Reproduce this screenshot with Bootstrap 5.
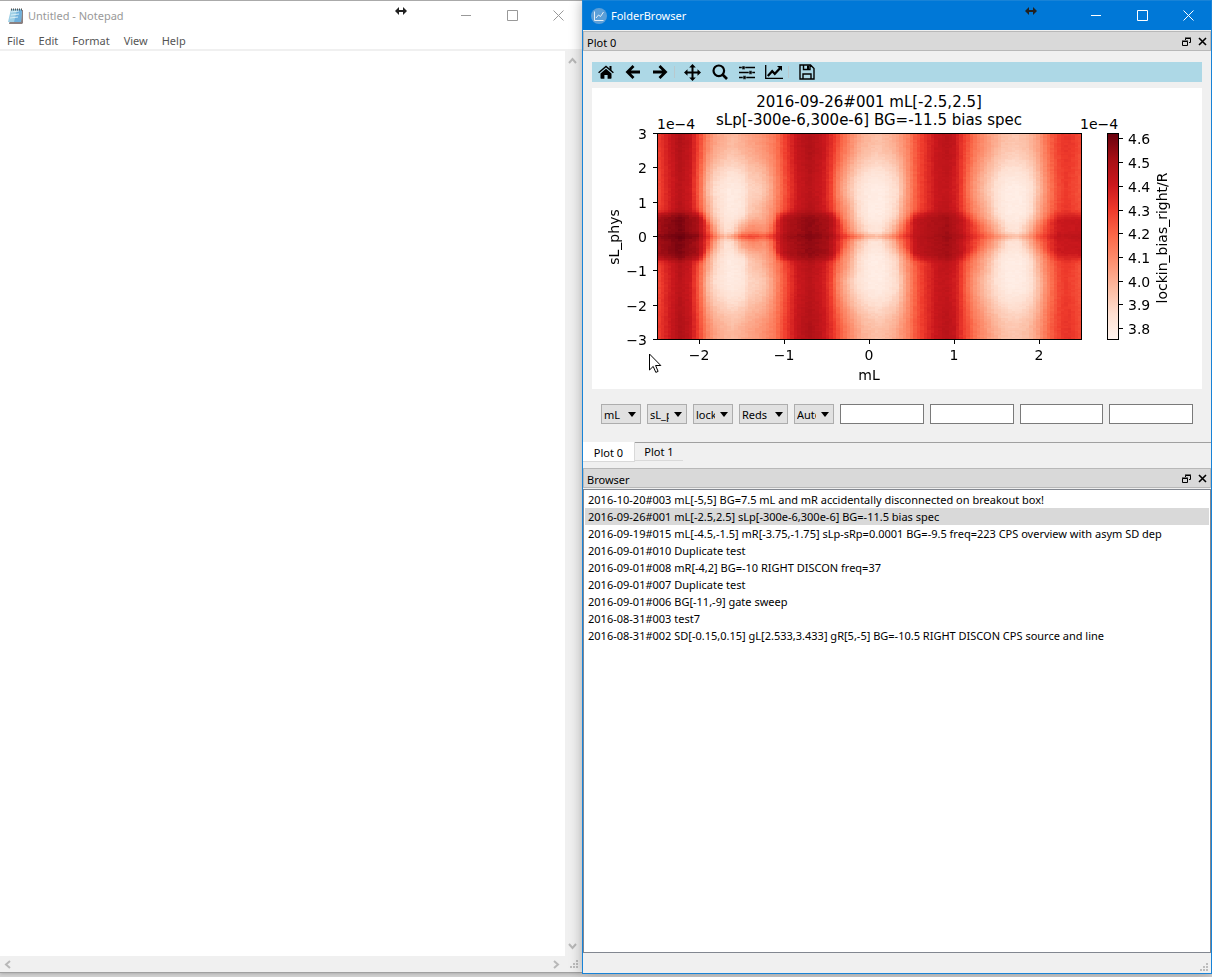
<!DOCTYPE html>
<html lang="en">
<head>
<meta charset="utf-8">
<meta name="viewport" content="width=device-width, initial-scale=1">
<title>FolderBrowser</title>
<link href="https://cdn.jsdelivr.net/npm/bootstrap@5.3.0/dist/css/bootstrap.min.css" rel="stylesheet">
<style>
body { font-family: "Noto Sans", "Open Sans", sans-serif; font-size: 11px; line-height: 17px; color: #000; background: #d2d2d2; }
button { color: inherit; font: inherit; }
svg { display: block; }
.desktop { display: grid; grid-template-columns: 582fr 630fr; min-height: 100vh; padding-bottom: 3px; }
.bare { background: none; border: 0; padding: 0; display: flex; align-items: center; justify-content: center; }

.win-note { background: #fff; border-top: 1px solid #aaa; border-bottom: 1px solid #a0a0a0; box-shadow: 0 0 4px #999; min-width: 0; margin-bottom: 1px; }
.titlebar { height: 29px; }
.win-note .titlebar { color: #999; padding: 0 1px 0 8px; }
.win-btn { width: 46px; height: 28px; }
.menu-row { height: 21px; padding: 2px 0 0 7px; gap: 14px; border-bottom: 2px solid #f0f0f0; color: #555; }
.menu-row a { color: inherit; text-decoration: none; }
.editor { display: grid; grid-template-columns: 1fr 17px; grid-template-rows: 1fr 16px; background: #f0f0f0; color: #b8b8b8; }
.editor textarea { border: 0; resize: none; background: #fff; outline: 0; width: 100%; }
.bar-v { padding: 4px 2px 4px 0; }
.bar-h { padding: 0 4px; }

.win-folder { background: #f0f0f0; border: 1px solid #1883d7; box-shadow: 0 0 12px rgba(0,0,0,.3); min-width: 0; z-index: 1; }
.win-folder .titlebar { background: #0078d7; color: #fff; padding-left: 8px; }
.dock-title { background: #d9d9d9; border: 1px solid #b8b8b8; height: 20px; padding: 2px 0 0 3px; margin-top: 1px; line-height: 17px; }
.dock-title button { width: 16px; height: 14px; }
.plot-body { padding: 11px 9px 18px; }
.tools { background: #add8e6; height: 20px; }
.tools button { width: 27px; height: 20px; }
.tools i { width: 6px; height: 12px; border-left: 1px solid #b9c9ce; margin-right: -1px; margin-left: 1px; }
.figure-box { background: #fff; margin-top: 6px; }
.figure-box text { font-family: "DejaVu Sans", sans-serif; font-size: 14px; fill: #000; }
.figure-box .heading { font-size: 15px; }
.axis path, .frame { stroke: #000; fill: none; shape-rendering: crispEdges; }
.controls { gap: 6px; padding: 15px 9px 0 9px; }
.pick { position: relative; flex: 0 0 40px; }
.pick.wide { flex-basis: 49px; }
.pick select { appearance: none; width: 100%; height: 20px; border: 1px solid #adadad; border-radius: 0; background: #e1e1e1; padding: 1px 17px 0 2px; color: #000; display: block; }
.pick::after { content: ""; position: absolute; right: 5px; top: 8px; border: 4px solid transparent; border-top: 5px solid #000; border-bottom: 0; pointer-events: none; }
.controls input { flex: 1 1 0; min-width: 0; height: 20px; border: 1px solid #7a7a7a; background: #fff; padding: 0 3px; }
.dock-tabs { border-top: 1px solid #a0a0a0; height: 26px; }
.dock-tabs button { border: 0; height: 18px; border-bottom: 1px solid #d9d9d9; width: 48px; background: none; padding: 0; }
.dock-tabs .active { height: 20px; width: 52px; background: #fff; border-right: 1px solid #d9d9d9; margin-top: -1px; padding-top: 2px; }
.runs { background: #fff; border: 1px solid #828790; margin-top: 1px; padding: 1px; }
.runs .list-group-item { border: 0; padding: 0 3px; background: none; color: #000; border-radius: 0; white-space: nowrap; overflow: hidden; line-height: 17px; }
.runs .list-group-item.active { background: #d9d9d9; margin: 0; }
.status { height: 20px; padding: 0 3px 2px 0; color: #bbb; }

.cursor { position: absolute; z-index: 5; pointer-events: none; }
.cur-a { left: 395px; top: 6px; }
.cur-b { left: 1025px; top: 6px; }
.cur-c { left: 649px; top: 353px; }
</style>
</head>
<body>
<svg width="0" height="0" class="position-absolute" aria-hidden="true">
  <defs>
    <symbol id="resize" viewBox="0 0 12 10"><path d="M0 5l4-4v3h4V1l4 4-4 4V6H4v3z" fill="#222"/></symbol>
    <symbol id="grip" viewBox="0 0 8 8"><path d="M6 0h2v2H6zM3 3h2v2H3zM6 3h2v2H6zM0 6h2v2H0zM3 6h2v2H3zM6 6h2v2H6z" fill="#bdbdbd"/></symbol>
    <symbol id="float" viewBox="0 0 9 9"><path d="M3.500 3V1.500h5v4H7M3 1h6M.5 4.500h5v4h-5zM0 4h6" fill="none" stroke="#000"/></symbol>
    <symbol id="shut" viewBox="0 0 9 9"><path d="M1 1l7 7M8 1L1 8" stroke="#000" stroke-width="1.600"/></symbol>
    <symbol id="min" viewBox="0 0 11 11"><path d="M0 5.500h10" stroke="currentColor"/></symbol>
    <symbol id="max" viewBox="0 0 11 11"><path d="M.5.5h10v10H.5z" fill="none" stroke="currentColor"/></symbol>
    <symbol id="exit" viewBox="0 0 11 11"><path d="M.5.5l10 10M10.500.5l-10 10" stroke="currentColor"/></symbol>
  </defs>
</svg>
<main class="desktop">
  <section class="win-note d-flex flex-column" aria-label="Notepad">
    <header class="titlebar d-flex align-items-center">
      <svg width="16" height="18" viewBox="0 0 16 18" class="me-1"><path d="M4 3h11v13l-1 1H1z" fill="#8b8080"/><path d="M3 2h11l-1 13H0z" fill="#9fd0e6"/><path d="M9 3h5l-1 12H6z" fill="#6fb0dc"/><path d="M3 5l8-1M3 8l8-1M2 11l8-1" stroke="#d7eef7"/><path d="M3 2.500h11" stroke="#555" stroke-width="2" stroke-dasharray="1 1"/></svg>
      <span class="me-auto">Untitled - Notepad</span>
      <button class="bare win-btn" aria-label="Minimize"><svg width="11" height="11"><use href="#min"/></svg></button>
      <button class="bare win-btn" aria-label="Maximize"><svg width="11" height="11"><use href="#max"/></svg></button>
      <button class="bare win-btn" aria-label="Close"><svg width="11" height="11"><use href="#exit"/></svg></button>
    </header>
    <nav class="menu-row d-flex"><a href="#">File</a><a href="#">Edit</a><a href="#">Format</a><a href="#">View</a><a href="#">Help</a></nav>
    <div class="editor flex-grow-1">
      <textarea aria-label="Document text"></textarea>
      <div class="bar-v d-flex flex-column justify-content-between align-items-center">
        <button class="bare" aria-label="Scroll up"><svg width="9" height="11" viewBox="0 0 9 11"><path d="M1 8l3.500-4L8 8" fill="none" stroke="currentColor" stroke-width="2"/></svg></button>
        <button class="bare" aria-label="Scroll down"><svg width="9" height="11" viewBox="0 0 9 11"><path d="M1 3l3.500 4L8 3" fill="none" stroke="currentColor" stroke-width="2"/></svg></button>
      </div>
      <div class="bar-h d-flex justify-content-between align-items-center">
        <button class="bare" aria-label="Scroll left"><svg width="9" height="9" viewBox="0 0 9 9"><path d="M6 1L2 4.500 6 8" fill="none" stroke="currentColor" stroke-width="2"/></svg></button>
        <button class="bare" aria-label="Scroll right"><svg width="9" height="9" viewBox="0 0 9 9"><path d="M2 1l4 3.500L2 8" fill="none" stroke="currentColor" stroke-width="2"/></svg></button>
      </div>
      <div class="d-flex justify-content-center align-items-end pb-1"><svg width="8" height="8"><use href="#grip"/></svg></div>
    </div>
  </section>

  <section class="win-folder d-flex flex-column" aria-label="FolderBrowser">
    <header class="titlebar d-flex align-items-center">
      <svg width="16" height="16" viewBox="0 0 16 16" class="me-1"><circle cx="8" cy="8" r="8" fill="#5c9fd8"/><path d="M3.500 3.500v9h9M5 10l2.500-3 2 1.500L12.500 4" fill="none" stroke="#e4eef6"/></svg>
      <span class="me-auto">FolderBrowser</span>
      <button class="bare win-btn" aria-label="Minimize"><svg width="11" height="11"><use href="#min"/></svg></button>
      <button class="bare win-btn" aria-label="Maximize"><svg width="11" height="11"><use href="#max"/></svg></button>
      <button class="bare win-btn" aria-label="Close"><svg width="11" height="11"><use href="#exit"/></svg></button>
    </header>
    <div class="dock-title d-flex"><span class="me-auto">Plot 0</span>
      <button class="bare" aria-label="Float Plot 0"><svg width="9" height="9"><use href="#float"/></svg></button>
      <button class="bare" aria-label="Close Plot 0"><svg width="9" height="9"><use href="#shut"/></svg></button>
    </div>
    <div class="plot-body">
      <div class="tools d-flex align-items-center" role="toolbar" aria-label="Plot tools">
        <button class="bare" aria-label="Home"><svg width="16" height="16" viewBox="0 0 16 16"><path d="M8 4.800L13.500 9.500V14a.7.7 0 0 1-.7.7H9.600V11H6.400v3.700H3.200a.7.7 0 0 1-.7-.7V9.500z"/><path d="M.6 8.800L8 2.500l7.400 6.300" fill="none" stroke="#000" stroke-width="1.500"/><path d="M11.500 2h2v5l-2-1.700z"/></svg></button>
        <button class="bare" aria-label="Back"><svg width="16" height="16" viewBox="0 0 16 16"><path d="M15 8H3M8.500 2L2.500 8l6 6" fill="none" stroke="#000" stroke-width="2.800"/></svg></button>
        <button class="bare" aria-label="Forward"><svg width="16" height="16" viewBox="0 0 16 16"><path d="M1 8h12M7.500 2l6 6-6 6" fill="none" stroke="#000" stroke-width="2.800"/></svg></button>
        <i></i>
        <button class="bare" aria-label="Pan"><svg width="17" height="17" viewBox="0 0 17 17"><path d="M8.500 0l3.300 3.600H9.500v3.900h4V5.200L17 8.500l-3.500 3.300V9.500h-4v4h2.300L8.500 17l-3.300-3.500h2.300v-4h-4v2.300L0 8.500l3.500-3.300v2.300h4V3.600H5.200z"/></svg></button>
        <button class="bare" aria-label="Zoom"><svg width="16" height="16" viewBox="0 0 16 16"><circle cx="6.800" cy="6.800" r="5.300" fill="none" stroke="#000" stroke-width="2.200"/><path d="M10.500 10.500l4.500 4.500" stroke="#000" stroke-width="2.600"/></svg></button>
        <button class="bare" aria-label="Subplots"><svg width="16" height="16" viewBox="0 0 16 16"><path d="M0 3.500h16M0 8.500h16M0 13.500h16" stroke="#000" stroke-width="1.300"/><path d="M3 2h3v3.400H3zM10 6.800h3v3.400h-3zM4 11.800h3v3.400H4z" stroke="#add8e6" stroke-width=".5"/></svg></button>
        <button class="bare" aria-label="Customize"><svg width="18" height="16" viewBox="0 0 18 16"><path d="M.7 1v13.300H18" fill="none" stroke="#000" stroke-width="1.300"/><path d="M2.800 12l4.400-4.800 2.600 2.600L15 4.300" fill="none" stroke="#000" stroke-width="2.200"/><path d="M12 2h5v5z"/></svg></button>
        <i></i>
        <button class="bare" aria-label="Save"><svg width="16" height="16" viewBox="0 0 16 16"><path d="M1 1h10.500L15 4.500V15H1zM4 15v-5h8v5M4.500 1v4.500H11V1" fill="none" stroke="#000" stroke-width="1.400"/><path d="M8 1.500h2V5H8z"/></svg></button>
      </div>
      <div class="figure-box">
        <svg viewBox="0 0 610 301" width="100%" role="img" aria-label="Bias spectroscopy heat map">
          <defs><linearGradient id="reds" x1="0" y1="1" x2="0" y2="0">
            <stop offset="0" stop-color="#fff5f0"/><stop offset=".125" stop-color="#fee0d2"/><stop offset=".25" stop-color="#fcbba1"/><stop offset=".375" stop-color="#fc9272"/><stop offset=".5" stop-color="#fb6a4a"/><stop offset=".625" stop-color="#ef3b2c"/><stop offset=".75" stop-color="#cb181d"/><stop offset=".875" stop-color="#a50f15"/><stop offset="1" stop-color="#67000d"/>
          </linearGradient></defs>
          <text class="heading" x="277" y="19" text-anchor="middle">2016-09-26#001 mL[-2.5,2.5]</text>
          <text class="heading" x="277" y="37" text-anchor="middle">sLp[-300e-6,300e-6] BG=-11.5 bias spec</text>
          <text x="65" y="41">1e−4</text>
          <text x="488" y="41">1e−4</text>
          <foreignObject x="65" y="45" width="425" height="207"><canvas id="heat" width="425" height="207" class="d-block"></canvas></foreignObject>
          <rect class="frame" x="65.500" y="45.500" width="424" height="206"/>
          <rect x="515" y="45" width="12" height="207" fill="url(#reds)"/>
          <rect class="frame" x="515.500" y="45.500" width="11" height="206"/>
          <g class="axis" id="axes"></g>
          <text x="277" y="292" text-anchor="middle">mL</text>
          <text transform="translate(27 149) rotate(-90)" text-anchor="middle">sL_phys</text>
          <text transform="translate(575 150) rotate(-90)" text-anchor="middle">lockin_bias_right/R</text>
        </svg>
      </div>
      <form class="controls d-flex">
        <div class="pick"><select aria-label="X axis"><option>mL</option></select></div>
        <div class="pick"><select aria-label="Y axis"><option>sL_phys</option></select></div>
        <div class="pick"><select aria-label="Data"><option>lockin_bias_right/R</option></select></div>
        <div class="pick wide"><select aria-label="Colour map"><option>Reds</option></select></div>
        <div class="pick"><select aria-label="Aspect"><option>Auto</option></select></div>
        <input type="text" aria-label="Minimum"><input type="text" aria-label="Maximum"><input type="text" aria-label="Lower limit"><input type="text" aria-label="Upper limit">
      </form>
    </div>
    <div class="dock-tabs d-flex align-items-start"><button class="active">Plot 0</button><button>Plot 1</button></div>
    <div class="dock-title d-flex mt-0"><span class="me-auto">Browser</span>
      <button class="bare" aria-label="Float Browser"><svg width="9" height="9"><use href="#float"/></svg></button>
      <button class="bare" aria-label="Close Browser"><svg width="9" height="9"><use href="#shut"/></svg></button>
    </div>
    <div class="runs flex-grow-1">
      <ul class="list-group">
        <li class="list-group-item">2016-10-20#003 mL[-5,5] BG=7.5 mL and mR accidentally disconnected on breakout box!</li>
        <li class="list-group-item active">2016-09-26#001 mL[-2.5,2.5] sLp[-300e-6,300e-6] BG=-11.5 bias spec</li>
        <li class="list-group-item">2016-09-19#015 mL[-4.5,-1.5] mR[-3.75,-1.75] sLp-sRp=0.0001 BG=-9.5 freq=223 CPS overview with asym SD dep</li>
        <li class="list-group-item">2016-09-01#010 Duplicate test</li>
        <li class="list-group-item">2016-09-01#008 mR[-4,2] BG=-10 RIGHT DISCON freq=37</li>
        <li class="list-group-item">2016-09-01#007 Duplicate test</li>
        <li class="list-group-item">2016-09-01#006 BG[-11,-9] gate sweep</li>
        <li class="list-group-item">2016-08-31#003 test7</li>
        <li class="list-group-item">2016-08-31#002 SD[-0.15,0.15] gL[2.533,3.433] gR[5,-5] BG=-10.5 RIGHT DISCON CPS source and line</li>
      </ul>
    </div>
    <footer class="status d-flex justify-content-end align-items-end"><svg width="8" height="8"><use href="#grip"/></svg></footer>
  </section>
</main>
<svg class="cursor cur-a" width="12" height="10"><use href="#resize"/></svg>
<svg class="cursor cur-b" width="12" height="10"><use href="#resize"/></svg>
<svg class="cursor cur-c" width="13" height="21" viewBox="0 0 13 21"><path d="M.5 1v16l3.700-3.600 2.600 6 2.300-1-2.500-5.900h5.200z" fill="#fff" stroke="#000"/></svg>
<script src="https://cdn.jsdelivr.net/npm/bootstrap@5.3.0/dist/js/bootstrap.bundle.min.js"></script>
<script>
// Conductance profiles along mL: pairs of x and normalised value.
const far = [0,.62,10,.72,22,.84,33,.78,42,.6,50,.42,60,.31,75,.25,90,.31,105,.37,118,.46,128,.62,140,.78,152,.84,165,.78,175,.66,185,.5,195,.38,205,.28,220,.23,235,.28,250,.42,258,.55,268,.66,278,.76,288,.81,296,.78,306,.62,318,.46,330,.35,345,.24,357,.21,370,.25,380,.34,388,.46,396,.57,405,.64,412,.65,424,.58];
const lobe = [0,.58,10,.7,22,.81,33,.75,42,.52,50,.25,58,.13,72,.06,85,.08,92,.16,105,.2,112,.28,120,.42,130,.6,140,.75,152,.81,165,.75,173,.62,180,.42,190,.25,200,.12,213,.05,225,.05,240,.14,250,.36,260,.56,270,.68,280,.77,290,.78,300,.7,308,.52,315,.38,328,.22,340,.1,350,.05,364,.05,374,.12,382,.26,390,.42,400,.58,408,.63,424,.56];
const core = [0,.87,22,.96,40,.87,48,.68,54,.46,60,.27,68,.12,76,.15,84,.33,95,.42,108,.38,115,.5,122,.75,132,.85,152,.92,170,.87,178,.75,188,.5,200,.25,213,.1,222,.1,235,.25,245,.5,252,.65,258,.78,270,.83,290,.88,303,.79,315,.63,330,.42,340,.27,350,.12,360,.1,370,.24,380,.45,390,.62,400,.75,424,.77];
const line = [0,.93,22,1,40,.94,50,.72,60,.42,68,.28,76,.38,84,.6,95,.64,108,.58,118,.72,130,.88,152,.96,172,.89,184,.7,196,.55,208,.35,220,.28,232,.4,245,.62,258,.8,290,.91,305,.82,320,.64,340,.4,358,.25,370,.36,382,.6,400,.79,424,.81];
const stops = [[255,245,240],[254,224,210],[252,187,161],[252,146,114],[251,106,74],[239,59,44],[203,24,29],[165,15,21],[103,0,13]];
const at = (p, x) => {
  let i = 0;
  while (i < p.length - 4 && p[i + 2] < x) i += 2;
  return p[i + 1] + (p[i + 3] - p[i + 1]) * Math.min(1, (x - p[i]) / (p[i + 2] - p[i]));
};
const smooth = (a, b, v) => { const t = Math.max(0, Math.min(1, (v - a) / (b - a))); return t * t * (3 - 2 * t); };
const mix = (a, b, t) => a + (b - a) * t;
let seed = 7;
const noise = () => (seed = (seed * 16807) % 2147483647) / 2147483647 - .5;
const ctx = document.getElementById('heat').getContext('2d');
const nx = 121, ny = 121;
for (let r = 0; r < ny; r++) for (let c = 0; c < nx; c++) {
  const x = (c + .5) * 424 / nx, y = Math.abs((r + .5) * 207 / ny - 103.5);
  const f = at(far, x), l = at(lobe, x), k0 = at(core, x);
  // The lobes narrow towards the centre; the dark spots have rounded corners.
  const neck = mix(l, f, .45 * smooth(.05, .25, l));
  const edge = smooth(.45, .85, k0);
  let v = mix(k0, neck, smooth(mix(4, 17, edge), mix(26, 29, edge), y));
  v = mix(v, l, smooth(26, 46, y));
  v = mix(v, f, smooth(44, 98, y));
  v = mix(v, at(line, x), Math.exp(-y * y / 9) * .85);
  v = Math.max(0, Math.min(.999, v + noise() * .025)) * 8;
  const k = Math.floor(v), rgb = stops[k].map((s, i) => Math.round(mix(s, stops[k + 1][i], v - k)));
  ctx.fillStyle = `rgb(${rgb})`;
  const x0 = Math.round(c * 425 / nx), y0 = Math.round(r * 207 / ny);
  ctx.fillRect(x0, y0, Math.round((c + 1) * 425 / nx) - x0, Math.round((r + 1) * 207 / ny) - y0);
}
// Ticks and their labels.
const label = n => String(n).replace('-', '−');
let marks = '';
for (let n = -3; n <= 3; n++) {
  const y = Math.round(148 - n * 34.4);
  marks += `<path d="M61 ${y + .5}h4"/><text x="55" y="${y + 6}" text-anchor="end">${label(n)}</text>`;
}
for (let n = -2; n <= 2; n++) {
  const x = Math.round(277 + n * 84.8);
  marks += `<path d="M${x + .5} 252v4"/><text x="${x}" y="272" text-anchor="middle">${label(n)}</text>`;
}
for (let n = 0; n <= 8; n++) {
  const y = Math.round(240 - n * 23.7);
  marks += `<path d="M527 ${y + .5}h4"/><text x="536" y="${y + 6}">${(3.8 + n / 10).toFixed(1)}</text>`;
}
document.getElementById('axes').innerHTML = marks;
</script>
</body>
</html>
